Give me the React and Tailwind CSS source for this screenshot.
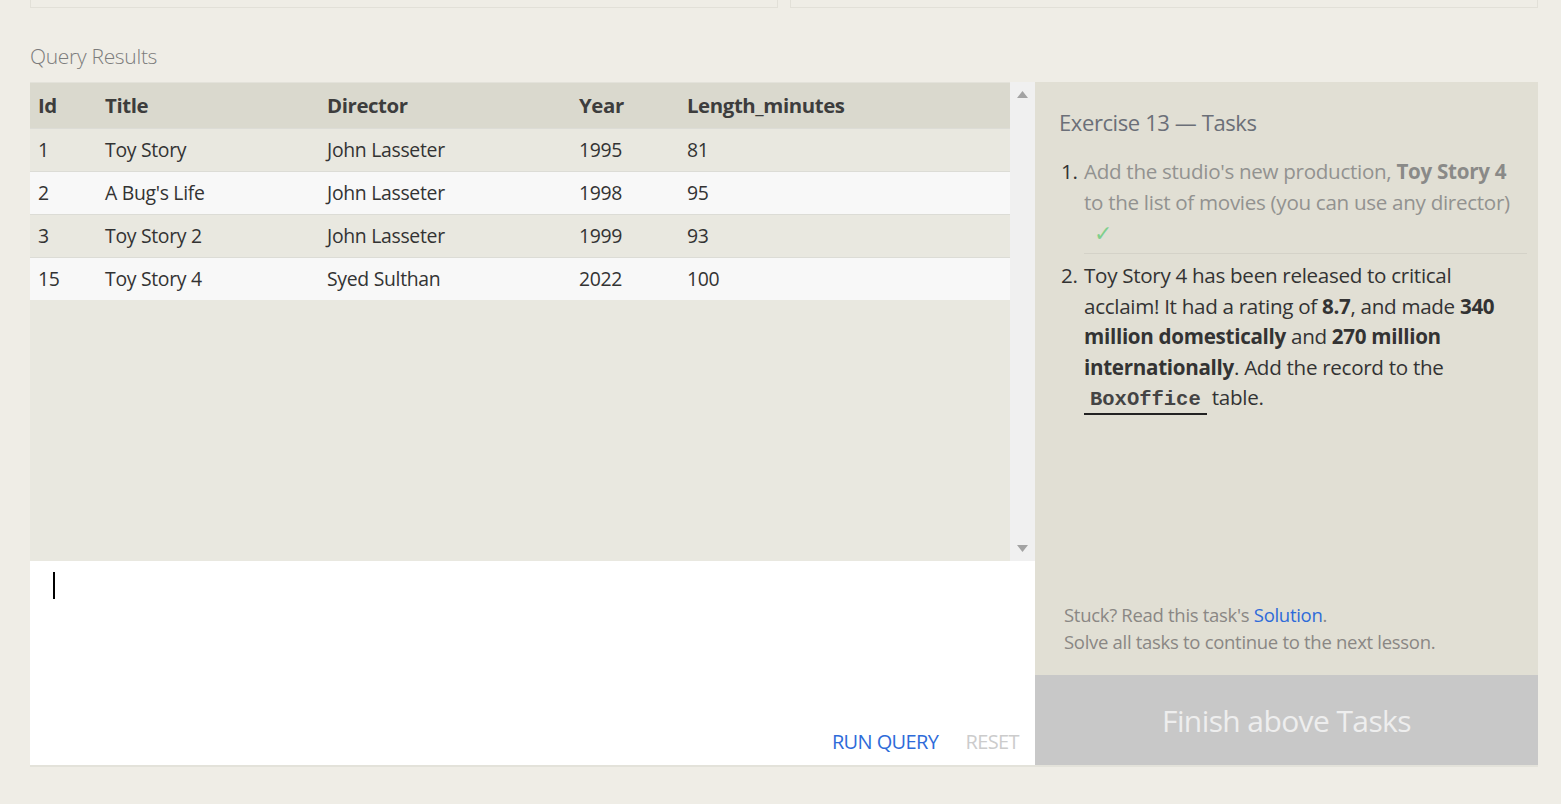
const rows = [
  { id: 1, title: 'Toy Story', director: 'John Lasseter', year: 1995, length: 81 },
  { id: 2, title: "A Bug's Life", director: 'John Lasseter', year: 1998, length: 95 },
  { id: 3, title: 'Toy Story 2', director: 'John Lasseter', year: 1999, length: 93 },
  { id: 15, title: 'Toy Story 4', director: 'Syed Sulthan', year: 2022, length: 100 },
];

const App = () => {
  return (
    <div className="min-h-[804px] bg-[#efede6] font-['Open_Sans',sans-serif] overflow-hidden">
      <div className="ml-[30px] w-[1508px]">
        {/* Previous cards (cut off) */}
        <div className="flex gap-[12px]">
          <div className="h-[8px] flex-1 border border-t-0 border-[#e2e0d8]"></div>
          <div className="h-[8px] flex-1 border border-t-0 border-[#e2e0d8]"></div>
        </div>

        <div className="h-[74px] flex items-center pt-[24px] text-[21px] font-light text-[#7c7c7c] tracking-[-0.3px]">
          Query Results
        </div>

        <div className="flex">
          {/* Left column */}
          <div className="w-[1005px] flex flex-col">
            <div className="h-[479px] flex bg-[#e9e8e0]">
              <div className="w-[980px]">
                <div className="grid grid-cols-[67px_222px_252px_108px_1fr] h-[46px] items-center bg-[#dad9ce] border-t border-[#e3e2da] text-[20.4px] font-bold text-[#3d3d3d] tracking-[-0.4px]">
                  <div className="pl-[8px]">Id</div>
                  <div className="pl-[8px]">Title</div>
                  <div className="pl-[8px]">Director</div>
                  <div className="pl-[8px]">Year</div>
                  <div className="pl-[8px]">Length_minutes</div>
                </div>
                {rows.map((r, i) => (
                  <div
                    key={r.id}
                    className={`grid grid-cols-[67px_222px_252px_108px_1fr] h-[43px] items-center border-t border-[#dcdcd6] text-[19.4px] text-[#333] tracking-[-0.3px] ${i % 2 === 0 ? 'bg-[#e9e8e0]' : 'bg-[#f8f8f8]'}`}
                  >
                    <div className="pl-[8px]">{r.id}</div>
                    <div className="pl-[8px]">{r.title}</div>
                    <div className="pl-[8px]">{r.director}</div>
                    <div className="pl-[8px]">{r.year}</div>
                    <div className="pl-[8px]">{r.length}</div>
                  </div>
                ))}
              </div>
              {/* scrollbar */}
              <div className="w-[25px] bg-[#f0f0f0] flex flex-col justify-between items-center py-[9px]">
                <svg width="11" height="7" viewBox="0 0 11 7"><path d="M5.5 0 L11 7 L0 7 Z" fill="#a3a3a3" /></svg>
                <svg width="11" height="7" viewBox="0 0 11 7"><path d="M0 0 L11 0 L5.5 7 Z" fill="#a3a3a3" /></svg>
              </div>
            </div>

            {/* Editor */}
            <div className="h-[206px] bg-white border-b-[2px] border-[#e3e2da] flex flex-col justify-between">
              <div className="pl-[23px] pt-[11px]">
                <div className="w-[2px] h-[27px] bg-black"></div>
              </div>
              <div className="flex justify-end gap-[27px] pr-[16px] pb-[8px] text-[20px] tracking-[-0.6px]">
                <span className="text-[#2e6bd9]">RUN QUERY</span>
                <span className="text-[#cccccc]">RESET</span>
              </div>
            </div>
          </div>

          {/* Right panel */}
          <div className="w-[503px] flex flex-col">
            <div className="h-[593px] bg-[#e1dfd4] flex flex-col justify-between pl-[24px] pr-[11px] pt-[25px] pb-[20px]">
              <div>
                <h2 className="text-[22px] text-[#6b6f78] tracking-[-0.4px] leading-[30px]">Exercise 13 — Tasks</h2>
                <ol className="mt-[19px] text-[20.6px] leading-[30.5px] tracking-[-0.3px]">
                  <li className="flex text-[#929290]">
                    <span className="w-[25px] pl-[2px] text-[#333]">1.</span>
                    <div className="flex-1 border-b border-[#d4d2c8] pb-[6px]">
                      Add the studio's new production, <b className="font-bold text-[#8a8a88]">Toy Story 4</b> to the list of movies (you can use any director)
                      <div className="pl-[10px] text-[#7fcf8c] text-[22px] leading-[30px]">✓</div>
                    </div>
                  </li>
                  <li className="flex text-[#333] mt-[6px]">
                    <span className="w-[25px] pl-[2px]">2.</span>
                    <div className="flex-1 pr-[4px]">
                      Toy Story 4 has been released to critical acclaim! It had a rating of <b>8.7</b>, and made <b>340 million domestically</b> and <b>270 million internationally</b>. Add the record to the{' '}
                      <code className="inline-block font-['Liberation_Mono',monospace] font-bold text-[20.5px] text-[#444] px-[6px] leading-[26px] border-b-2 border-[#222] tracking-[0px]">BoxOffice</code> table.
                    </div>
                  </li>
                </ol>
              </div>
              <div className="text-[18.5px] leading-[27px] text-[#8a8784] tracking-[-0.3px] pl-[5px]">
                <div>Stuck? Read this task's <span className="text-[#2e6bd9]">Solution</span>.</div>
                <div>Solve all tasks to continue to the next lesson.</div>
              </div>
            </div>
            <div className="h-[92px] bg-[#c8c8c8] flex items-center justify-center text-[30px] text-[#eeeeee] tracking-[-0.6px] border-b-[2px] border-[#e3e2da]">
              Finish above Tasks
            </div>
          </div>
        </div>
      </div>
    </div>
  );
};

export default App;
